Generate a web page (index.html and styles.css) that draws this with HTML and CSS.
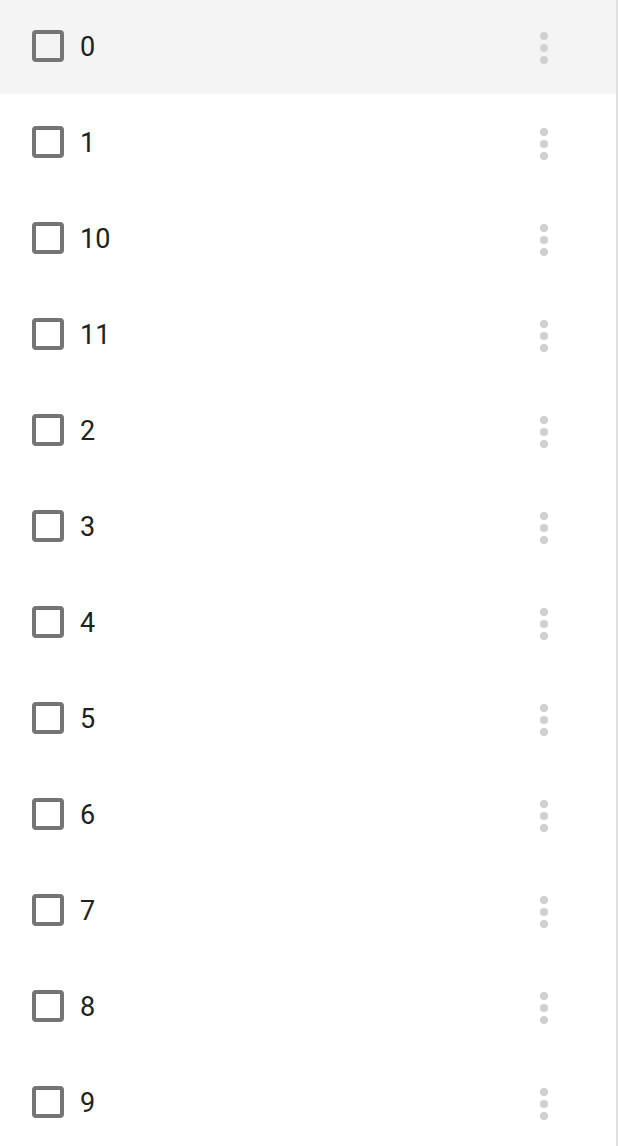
FILE: index.html
```html
<!DOCTYPE html>
<html>
<head>
<meta charset="utf-8">
<link rel="stylesheet" href="styles.css">
</head>
<body>
<div class="panel">
  <ul class="list">
    <li class="row active"><span class="box"></span><span class="label">0</span><span class="more"><i></i><i></i><i></i></span></li>
    <li class="row"><span class="box"></span><span class="label">1</span><span class="more"><i></i><i></i><i></i></span></li>
    <li class="row"><span class="box"></span><span class="label">10</span><span class="more"><i></i><i></i><i></i></span></li>
    <li class="row"><span class="box"></span><span class="label">11</span><span class="more"><i></i><i></i><i></i></span></li>
    <li class="row"><span class="box"></span><span class="label">2</span><span class="more"><i></i><i></i><i></i></span></li>
    <li class="row"><span class="box"></span><span class="label">3</span><span class="more"><i></i><i></i><i></i></span></li>
    <li class="row"><span class="box"></span><span class="label">4</span><span class="more"><i></i><i></i><i></i></span></li>
    <li class="row"><span class="box"></span><span class="label">5</span><span class="more"><i></i><i></i><i></i></span></li>
    <li class="row"><span class="box"></span><span class="label">6</span><span class="more"><i></i><i></i><i></i></span></li>
    <li class="row"><span class="box"></span><span class="label">7</span><span class="more"><i></i><i></i><i></i></span></li>
    <li class="row"><span class="box"></span><span class="label">8</span><span class="more"><i></i><i></i><i></i></span></li>
    <li class="row"><span class="box"></span><span class="label">9</span><span class="more"><i></i><i></i><i></i></span></li>
  </ul>
</div>
</body>
</html>
```
FILE: styles.css
```css
html, body {
  margin: 0;
  padding: 0;
  background: #ffffff;
}
.panel {
  width: 616px;
  height: 1146px;
  border-right: 2px solid #e0e0e0;
  overflow: hidden;
}
.list {
  list-style: none;
  margin: 0;
  padding: 0;
  display: flex;
  flex-direction: column;
  gap: 2px;
}
.row {
  height: 94px;
  display: flex;
  align-items: center;
  padding-left: 32px;
  box-sizing: border-box;
  font-family: Roboto, "Liberation Sans", sans-serif;
  font-size: 27px;
  color: #212121;
}
.row.active {
  background: #f4f4f4;
}
.box {
  width: 32px;
  height: 32px;
  box-sizing: border-box;
  border: 4px solid #757575;
  border-radius: 4px;
  margin-top: -2px;
  flex: none;
}
.label {
  margin-left: 16px;
  flex: 1;
}
.more {
  width: 8px;
  display: flex;
  flex-direction: column;
  align-items: center;
  gap: 4px;
  margin-right: 68px;
  margin-top: 2px;
}
.more i {
  display: block;
  width: 8px;
  height: 8px;
  border-radius: 50%;
  background: #d0d0d0;
}
```
